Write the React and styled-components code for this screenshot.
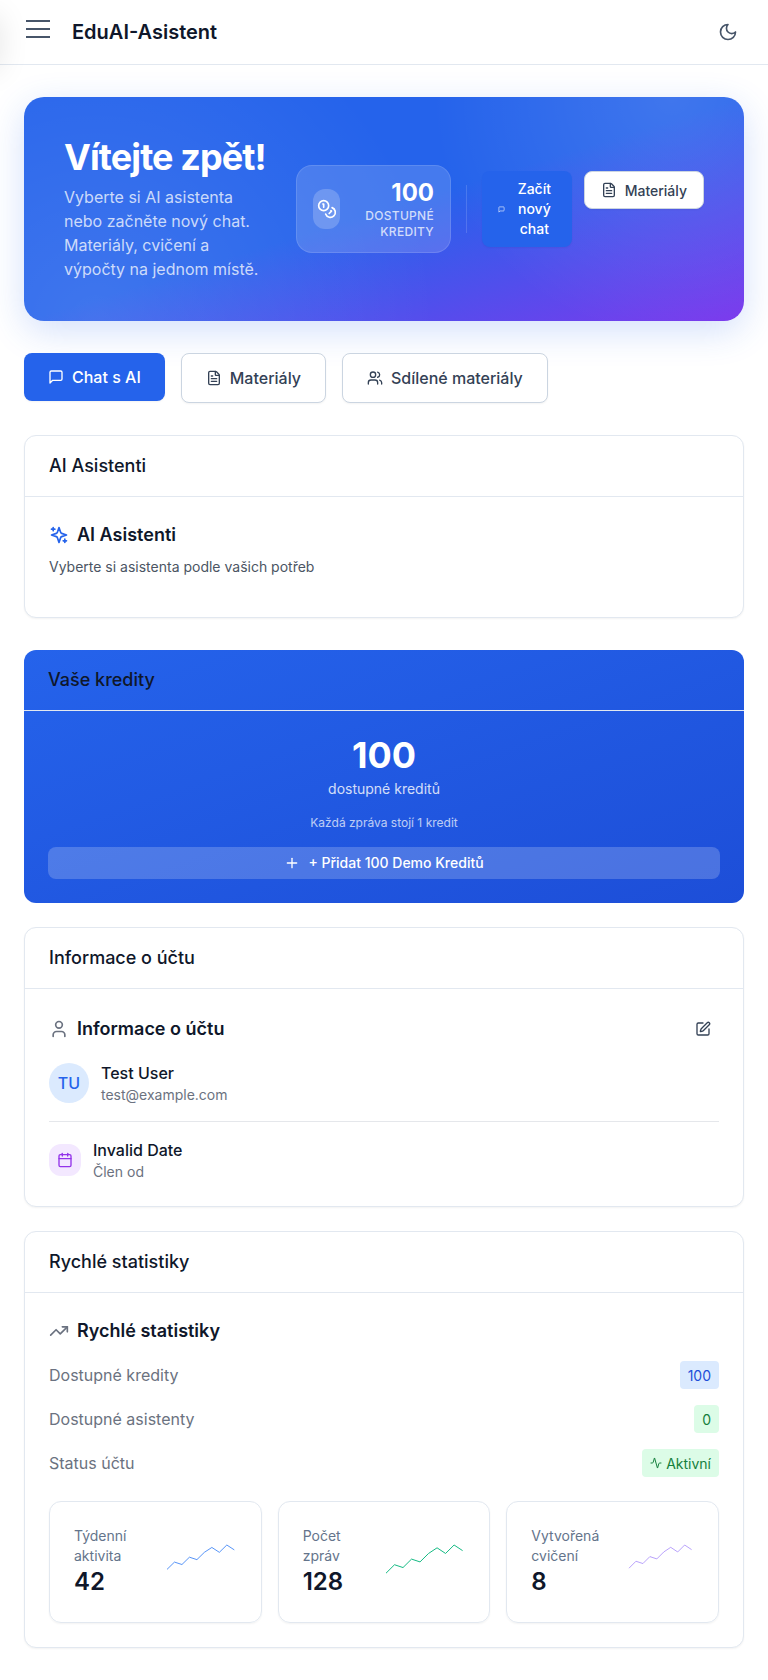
import React from 'react';
import styled, { createGlobalStyle, css } from 'styled-components';
import {
  Activity, Calendar, Coins, FileText, Plus, SquarePen, TrendingUp, User, Users,
} from 'lucide-react';

const GlobalStyle = createGlobalStyle`
  *, *::before, *::after { box-sizing: border-box; }
  body {
    margin: 0;
    background: #fff;
    color: #0f172a;
    font-family: Inter, "Liberation Sans", sans-serif;
    font-size: 16px;
    line-height: 1.5;
    -webkit-font-smoothing: antialiased;
  }
  h1, h2, h3, p { margin: 0; }
  button { font-family: inherit; cursor: pointer; }
  svg { flex-shrink: 0; display: block; }
`;

const Page = styled.div`
  min-height: 1680px;
  overflow: hidden;
`;

const Header = styled.header`
  position: relative;
  display: flex;
  align-items: center;
  height: 65px;
  padding: 0 24px;
  border-bottom: 1px solid #e2e8f0;
`;

const DrawerEdge = styled.div`
  position: absolute;
  left: -40px;
  top: 12px;
  width: 40px;
  height: 54px;
  pointer-events: none;
  box-shadow: 0 4px 30px rgba(0, 0, 0, 0.1);
`;

const IconButton = styled.button`
  display: flex;
  align-items: center;
  justify-content: center;
  padding: 0;
  border: 0;
  background: transparent;
  color: #475569;
`;

const MenuButton = styled(IconButton)`
  width: 24px;
  height: 24px;
  margin: 0 22px 6px 2px;
`;

const ThemeButton = styled(IconButton)`
  width: 32px;
  height: 32px;
  margin-left: auto;
`;

const Brand = styled.h1`
  font-size: 20px;
  font-weight: 600;
  line-height: 28px;
  color: #0f172a;
`;

const Main = styled.main`
  padding: 32px 24px;
`;

const Hero = styled.section`
  display: flex;
  align-items: center;
  height: 224px;
  padding: 0 40px;
  border-radius: 20px;
  color: #fff;
  background:
    radial-gradient(circle 340px at 10% 100%, rgba(255, 255, 255, 0.12), transparent),
    radial-gradient(circle 240px at 90% 0%, rgba(255, 255, 255, 0.12), transparent),
    linear-gradient(to bottom right, #2563eb 0%, #2563eb 50%, #7c3aed 100%);
  box-shadow: 0 10px 36px rgba(37, 99, 235, 0.2);
`;

const HeroCopy = styled.div`
  flex: none;
  width: 204px;
`;

const HeroTitle = styled.h2`
  font-size: 36px;
  font-weight: 700;
  line-height: 40px;
  letter-spacing: -0.9px;
  white-space: nowrap;
`;

const HeroText = styled.p`
  margin-top: 8px;
  font-size: 16px;
  line-height: 24px;
  color: rgba(255, 255, 255, 0.75);
`;

const CreditBox = styled.div`
  display: flex;
  align-items: center;
  justify-content: space-between;
  flex: none;
  width: 155px;
  height: 88px;
  margin-left: 28px;
  padding: 0 16px;
  border: 1px solid rgba(255, 255, 255, 0.12);
  border-radius: 16px;
  background: rgba(255, 255, 255, 0.15);
`;

const CoinBadge = styled.div`
  display: flex;
  align-items: center;
  justify-content: center;
  width: 27px;
  height: 40px;
  border-radius: 12px;
  background: rgba(255, 255, 255, 0.2);
`;

const CreditCount = styled.div`
  padding-top: 2px;
  text-align: right;
  font-size: 12px;
  line-height: 16px;
  font-weight: 500;
  letter-spacing: 0.3px;
  text-transform: uppercase;
  color: rgba(255, 255, 255, 0.75);

  strong {
    display: block;
    font-size: 24px;
    font-weight: 700;
    line-height: 26px;
    letter-spacing: 0;
    margin-bottom: 2px;
    color: #fff;
  }
`;

const HeroDivider = styled.div`
  flex: none;
  width: 1px;
  height: 48px;
  margin: 0 15px;
  background: rgba(255, 255, 255, 0.15);
`;

const HeroActions = styled.div`
  display: flex;
  flex: 1;
  align-items: flex-start;
  gap: 12px;
`;

const Button = styled.button`
  display: flex;
  align-items: center;
  justify-content: center;
  gap: 8px;
  height: ${(p) => (p.$small ? 38 : 50)}px;
  padding: 0 ${(p) => (p.$small ? 16 : 24)}px;
  border: 1px solid #cbd5e1;
  border-radius: 8px;
  background: #fff;
  color: #334155;
  font-size: ${(p) => (p.$small ? 14 : 16)}px;
  font-weight: 500;
  line-height: 1.5;
  white-space: nowrap;
  box-shadow: 0 1px 2px rgba(0, 0, 0, 0.05);

  ${(p) => p.$primary && css`
    height: 48px;
    border: 0;
    background: #2563eb;
    color: #fff;
  `}
`;

const StartButton = styled(Button)`
  flex: 1;
  height: 76px;
  line-height: 20px;
  white-space: normal;

  span { flex: 1; }
`;

const Tabs = styled.nav`
  display: flex;
  align-items: flex-start;
  gap: 16px;
  height: 50px;
  margin: 32px 0;
`;

const Card = styled.section`
  margin-bottom: ${(p) => p.$gap ?? 24}px;
  border: 1px solid #e2e8f0;
  border-radius: 12px;
  background: #fff;
  box-shadow: 0 1px 2px rgba(0, 0, 0, 0.05);
`;

const CardHeader = styled.header`
  height: 61px;
  padding: 16px 24px;
  border-bottom: 1px solid #e2e8f0;
  font-size: 18px;
  font-weight: 500;
  line-height: 28px;
  color: #0f172a;
`;

const CardBody = styled.div`
  height: ${(p) => p.$height}px;
  padding: 24px;
`;

const SectionTitle = styled.h3`
  display: flex;
  align-items: center;
  gap: 8px;
  height: ${(p) => p.$height ?? 28}px;
  font-size: 18px;
  font-weight: 600;
  line-height: 28px;
  color: #0f172a;

  > svg { color: ${(p) => p.$icon ?? '#6b7280'}; }
`;

const EditButton = styled(IconButton)`
  width: 32px;
  height: 32px;
  margin-left: auto;
  color: #334155;
`;

const Subtitle = styled.p`
  margin-top: 8px;
  font-size: 14px;
  line-height: 20px;
  color: #4b5563;
`;

const CreditsCard = styled.section`
  margin-bottom: 24px;
  border-radius: 12px;
  background: linear-gradient(to bottom right, #2563eb, #1d4ed8);
`;

const CreditsBody = styled.div`
  display: flex;
  flex-direction: column;
  align-items: center;
  height: 192px;
  padding: 24px;
  color: #fff;
`;

const BigNumber = styled.div`
  font-size: 36px;
  font-weight: 700;
  line-height: 40px;
`;

const CreditsLabel = styled.div`
  margin-top: 4px;
  font-size: 14px;
  line-height: 20px;
  opacity: 0.8;
`;

const CreditsNote = styled.div`
  margin: 16px 0;
  font-size: 12px;
  line-height: 16px;
  opacity: 0.7;
`;

const AddButton = styled(Button)`
  width: 100%;
  height: 32px;
  border: 0;
  background: rgba(255, 255, 255, 0.2);
  color: #fff;
  line-height: 20px;
  box-shadow: none;
`;

const People = styled.div`
  margin-top: 16px;
`;

const PersonRow = styled.div`
  display: flex;
  align-items: center;
  gap: 12px;
  height: 44px;
  font-size: 16px;
  font-weight: 500;
  line-height: 24px;

  small {
    display: block;
    font-size: 14px;
    font-weight: 400;
    line-height: 20px;
    color: #6b7280;
  }
`;

const Avatar = styled.div`
  display: flex;
  align-items: center;
  justify-content: center;
  width: 40px;
  height: 40px;
  border-radius: 50%;
  background: #dbeafe;
  color: #2563eb;
`;

const DateTile = styled.div`
  display: flex;
  align-items: center;
  justify-content: center;
  width: 32px;
  height: 32px;
  border-radius: 12px;
  background: #f3e8ff;
  color: #9333ea;
`;

const Rule = styled.hr`
  height: 1px;
  margin: 16px 0;
  border: 0;
  background: #e5e7eb;
`;

const StatRow = styled.div`
  display: flex;
  align-items: center;
  justify-content: space-between;
  height: 28px;
  margin-top: 16px;
  color: #6b7280;
`;

const badgeTones = {
  blue: css`background: #dbeafe; color: #1d4ed8;`,
  green: css`background: #dcfce7; color: #15803d;`,
};

const Badge = styled.span`
  display: flex;
  align-items: center;
  gap: 4px;
  height: 28px;
  padding: 0 8px;
  border-radius: 4px;
  font-size: 14px;
  ${(p) => badgeTones[p.$tone]}
`;

const TrendGrid = styled.div`
  display: grid;
  grid-template-columns: repeat(3, 1fr);
  gap: 16px;
  margin-top: 24px;
`;

const TrendCard = styled.article`
  display: flex;
  justify-content: space-between;
  height: 122px;
  padding: 24px;
  border: 1px solid #e2e8f0;
  border-radius: 12px;
  box-shadow: 0 1px 2px rgba(0, 0, 0, 0.05);
`;

const TrendLabel = styled.div`
  font-size: 14px;
  line-height: 20px;
  color: #64748b;

  strong {
    display: block;
    font-size: 24px;
    font-weight: 600;
    line-height: 32px;
    color: #0f172a;
  }
`;

const Sparkline = styled.svg`
  margin-top: 19px;
  overflow: visible;
`;

const StrokeIcon = ({ size, children }) => (
  <svg
    width={size}
    height={size}
    viewBox="0 0 24 24"
    fill="none"
    stroke="currentColor"
    strokeWidth="2"
    strokeLinecap="round"
    strokeLinejoin="round"
  >
    {children}
  </svg>
);

const ChatIcon = ({ size }) => (
  <StrokeIcon size={size}>
    <path d="M21 15a2 2 0 0 1-2 2H7l-4 4V5a2 2 0 0 1 2-2h14a2 2 0 0 1 2 2z" />
  </StrokeIcon>
);

const MoonIcon = ({ size }) => (
  <StrokeIcon size={size}>
    <path d="M12 3a6 6 0 0 0 9 9 9 9 0 1 1-9-9Z" />
  </StrokeIcon>
);

const SparklesIcon = ({ size }) => (
  <StrokeIcon size={size}>
    <path d="m12 3-1.912 5.813a2 2 0 0 1-1.275 1.275L3 12l5.813 1.912a2 2 0 0 1 1.275 1.275L12 21l1.912-5.813a2 2 0 0 1 1.275-1.275L21 12l-5.813-1.912a2 2 0 0 1-1.275-1.275L12 3Z" />
    <path d="M5 3v4M19 17v4M3 5h4M17 19h4" />
  </StrokeIcon>
);

const trends = [
  { label: ['Týdenní', 'aktivita'], value: 42, color: '#3b82f6', width: 67.3, height: 24.4 },
  { label: ['Počet', 'zpráv'], value: 128, color: '#10b981', width: 76.6, height: 28.2 },
  { label: ['Vytvořená', 'cvičení'], value: 8, color: '#a78bfa', width: 62.6, height: 23.2 },
];

const levels = [10, 7, 8, 5, 6, 3, 1, 3, 0, 2];

function Trend({ label, value, color, width, height }) {
  const points = levels
    .map((level, i) => `${(i * width) / 9},${(level * height) / 10}`)
    .join(' ');
  return (
    <TrendCard>
      <TrendLabel>
        {label[0]}<br />{label[1]}
        <strong>{value}</strong>
      </TrendLabel>
      <Sparkline width={width + 2.3} height={height}>
        <polyline points={points} fill="none" stroke={color} strokeWidth={width / 78} />
      </Sparkline>
    </TrendCard>
  );
}

export default function App() {
  return (
    <Page>
      <GlobalStyle />
      <Header>
        <DrawerEdge />
        <MenuButton aria-label="Menu">
          <svg width="24" height="24" stroke="currentColor" strokeWidth="2">
            <path d="M0 4h24M0 12h24M0 20h24" />
          </svg>
        </MenuButton>
        <Brand>EduAI-Asistent</Brand>
        <ThemeButton aria-label="Motiv"><MoonIcon size={20} /></ThemeButton>
      </Header>
      <Main>
        <Hero>
          <HeroCopy>
            <HeroTitle>Vítejte zpět!</HeroTitle>
            <HeroText>
              Vyberte si AI asistenta nebo začněte nový chat. Materiály, cvičení a výpočty na jednom místě.
            </HeroText>
          </HeroCopy>
          <CreditBox>
            <CoinBadge><Coins size={20} /></CoinBadge>
            <CreditCount>
              <strong>100</strong>
              Dostupné<br />kredity
            </CreditCount>
          </CreditBox>
          <HeroDivider />
          <HeroActions>
            <StartButton $small $primary>
              <ChatIcon size={7} />
              <span>Začít nový chat</span>
            </StartButton>
            <Button $small><FileText size={16} />Materiály</Button>
          </HeroActions>
        </Hero>

        <Tabs>
          <Button $primary><ChatIcon size={16} />Chat s AI</Button>
          <Button><FileText size={16} />Materiály</Button>
          <Button><Users size={16} />Sdílené materiály</Button>
        </Tabs>

        <Card $gap={32}>
          <CardHeader>AI Asistenti</CardHeader>
          <CardBody $height={120}>
            <SectionTitle $icon="#2563eb"><SparklesIcon size={20} />AI Asistenti</SectionTitle>
            <Subtitle>Vyberte si asistenta podle vašich potřeb</Subtitle>
          </CardBody>
        </Card>

        <CreditsCard>
          <CardHeader>Vaše kredity</CardHeader>
          <CreditsBody>
            <BigNumber>100</BigNumber>
            <CreditsLabel>dostupné kreditů</CreditsLabel>
            <CreditsNote>Každá zpráva stojí 1 kredit</CreditsNote>
            <AddButton $small><Plus size={16} />+ Přidat 100 Demo Kreditů</AddButton>
          </CreditsBody>
        </CreditsCard>

        <Card>
          <CardHeader>Informace o účtu</CardHeader>
          <CardBody $height={217}>
            <SectionTitle $height={32}>
              <User size={20} />Informace o účtu
              <EditButton aria-label="Upravit"><SquarePen size={16} /></EditButton>
            </SectionTitle>
            <People>
              <PersonRow>
                <Avatar>TU</Avatar>
                <div>Test User<small>test@example.com</small></div>
              </PersonRow>
              <Rule />
              <PersonRow>
                <DateTile><Calendar size={16} /></DateTile>
                <div>Invalid Date<small>Člen od</small></div>
              </PersonRow>
            </People>
          </CardBody>
        </Card>

        <Card $gap={0}>
          <CardHeader>Rychlé statistiky</CardHeader>
          <CardBody $height={354}>
            <SectionTitle><TrendingUp size={20} />Rychlé statistiky</SectionTitle>
            <StatRow>Dostupné kredity<Badge $tone="blue">100</Badge></StatRow>
            <StatRow>Dostupné asistenty<Badge $tone="green">0</Badge></StatRow>
            <StatRow>Status účtu<Badge $tone="green"><Activity size={12} />Aktivní</Badge></StatRow>
            <TrendGrid>
              {trends.map((trend) => <Trend key={trend.value} {...trend} />)}
            </TrendGrid>
          </CardBody>
        </Card>
      </Main>
    </Page>
  );
}
